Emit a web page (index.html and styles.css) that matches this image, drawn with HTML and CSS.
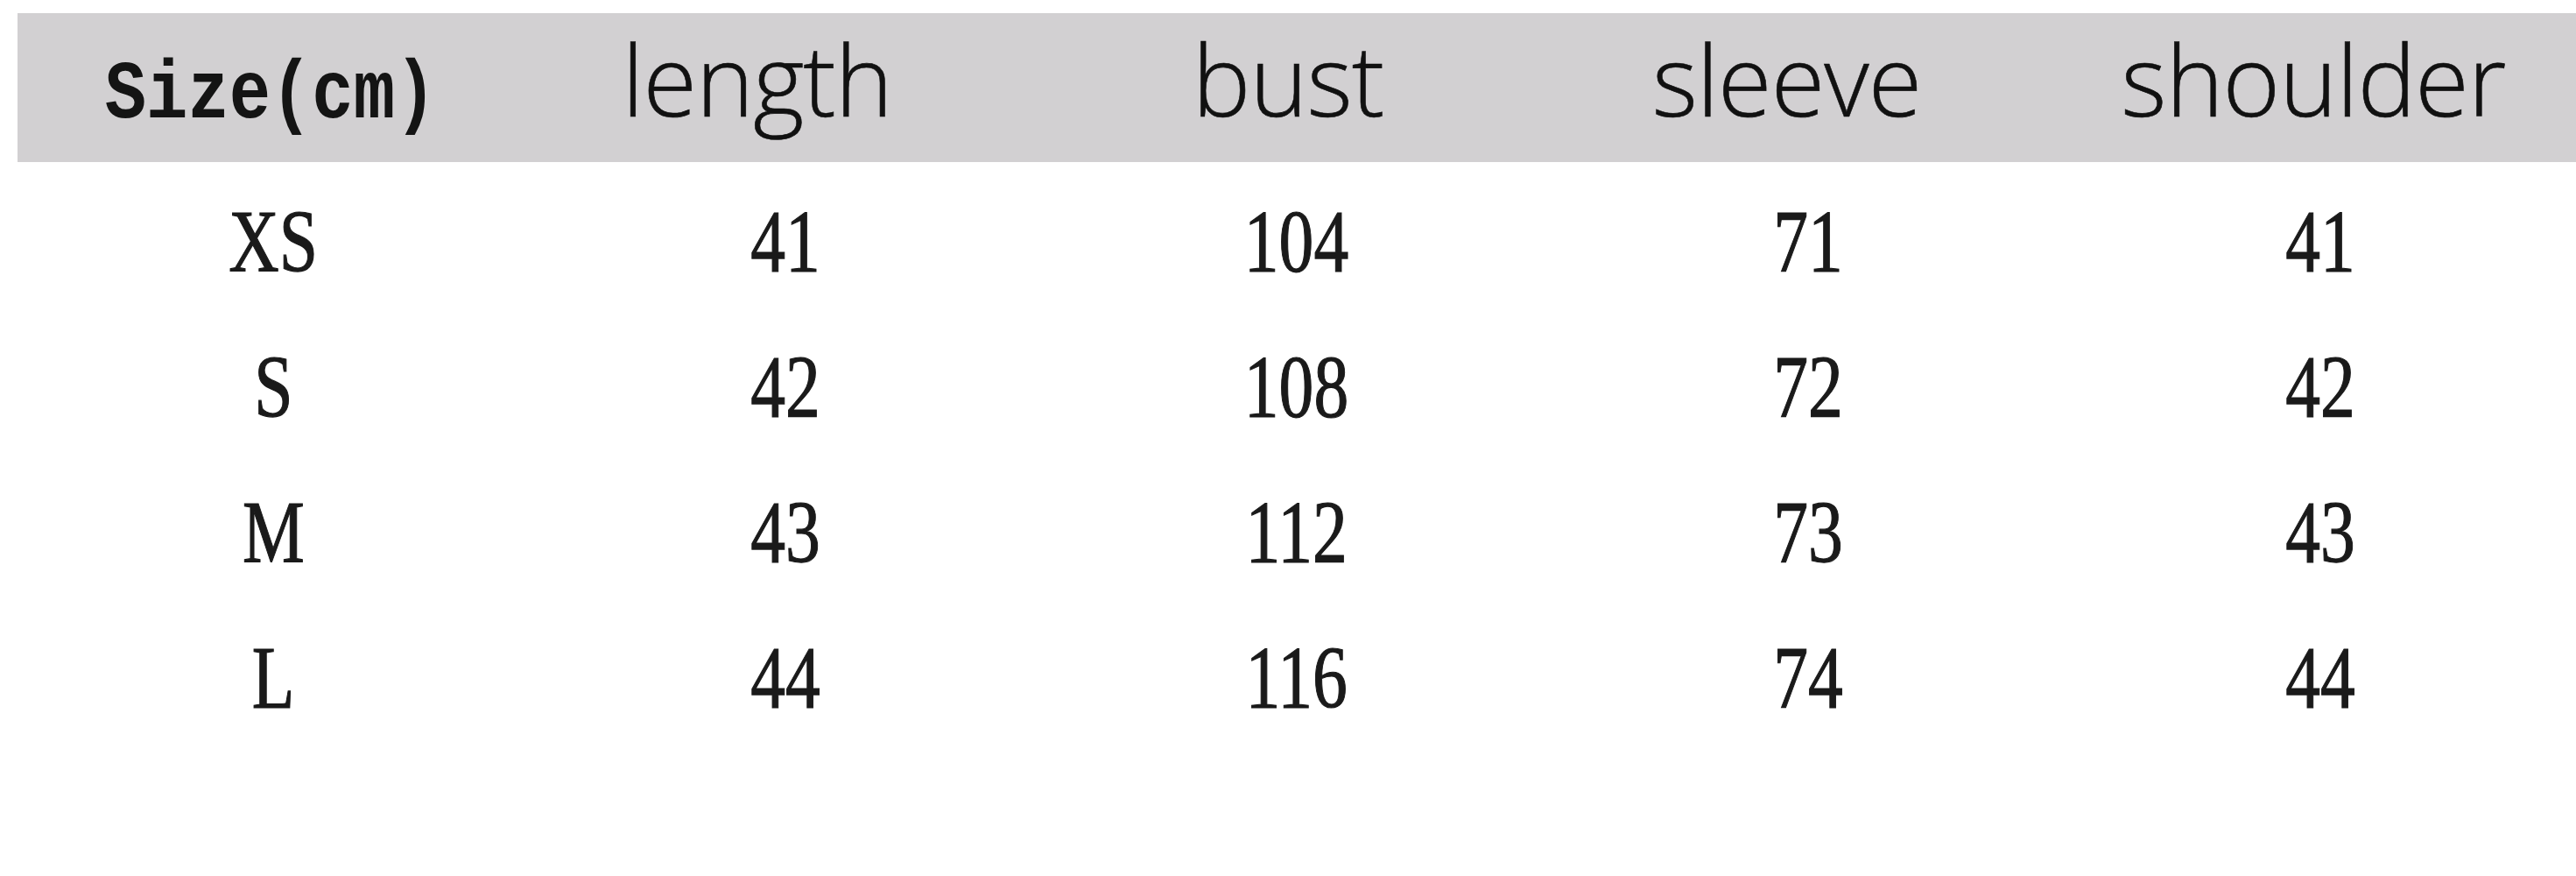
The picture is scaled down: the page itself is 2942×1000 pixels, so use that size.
FILE: index.html
```html
<!DOCTYPE html>
<html lang="en">
<head>
<meta charset="utf-8">
<title>Size chart</title>
<link rel="stylesheet" href="styles.css">
</head>
<body>
<div class="chart">
  <div class="row head">
    <div class="cell"><span class="size-label">Size(cm)</span></div>
    <div class="cell"><span class="col-label">length</span></div>
    <div class="cell"><span class="col-label">bust</span></div>
    <div class="cell"><span class="col-label">sleeve</span></div>
    <div class="cell"><span class="col-label">shoulder</span></div>
  </div>
  <div class="row body-row">
    <div class="cell"><span class="val">XS</span></div>
    <div class="cell"><span class="val">41</span></div>
    <div class="cell"><span class="val">104</span></div>
    <div class="cell"><span class="val">71</span></div>
    <div class="cell"><span class="val">41</span></div>
  </div>
  <div class="row body-row">
    <div class="cell"><span class="val">S</span></div>
    <div class="cell"><span class="val">42</span></div>
    <div class="cell"><span class="val">108</span></div>
    <div class="cell"><span class="val">72</span></div>
    <div class="cell"><span class="val">42</span></div>
  </div>
  <div class="row body-row">
    <div class="cell"><span class="val">M</span></div>
    <div class="cell"><span class="val">43</span></div>
    <div class="cell"><span class="val">112</span></div>
    <div class="cell"><span class="val">73</span></div>
    <div class="cell"><span class="val">43</span></div>
  </div>
  <div class="row body-row">
    <div class="cell"><span class="val">L</span></div>
    <div class="cell"><span class="val">44</span></div>
    <div class="cell"><span class="val">116</span></div>
    <div class="cell"><span class="val">74</span></div>
    <div class="cell"><span class="val">44</span></div>
  </div>
</div>
</body>
</html>
```

FILE: styles.css
```css
html, body {
  margin: 0;
  padding: 0;
  background: #ffffff;
}

.chart {
  margin: 15px 0 0 20px;
  width: 2922px;
}

.row {
  display: grid;
  grid-template-columns: repeat(5, 1fr);
}

.head {
  height: 170px;
  background: #d2d0d2;
}

.head .cell {
  display: flex;
  justify-content: center;
  align-items: flex-start;
}

.col-label {
  font-family: "Open Sans", "DejaVu Sans", sans-serif;
  font-weight: 300;
  font-size: 112px;
  line-height: 1;
  color: #111111;
  padding-top: 19px;
  letter-spacing: -1px;
  -webkit-text-stroke: 0.6px #111111;
}

.head .cell:nth-child(2) { padding-right: 64px; }
.head .cell:nth-child(3) { padding-right: 20px; }
.head .cell:nth-child(4) { padding-right: 50px; }
.head .cell:nth-child(5) { padding-right: 16px; }

.size-label {
  display: inline-block;
  font-family: "Liberation Mono", "DejaVu Sans Mono", monospace;
  font-weight: 700;
  font-size: 95px;
  line-height: 1;
  color: #141414;
  padding-top: 47px;
  margin-right: 6px;
  transform: scaleX(0.83);
}

.body-row {
  height: 166px;
}

.body-row .cell {
  display: flex;
  justify-content: center;
  align-items: center;
  padding-top: 16px;
}

.val {
  display: inline-block;
  font-family: "Liberation Serif", "Times New Roman", serif;
  font-size: 102px;
  line-height: 1;
  color: #1a1a1a;
  transform: scaleX(0.78);
  -webkit-text-stroke: 1.2px #1a1a1a;
}
```
